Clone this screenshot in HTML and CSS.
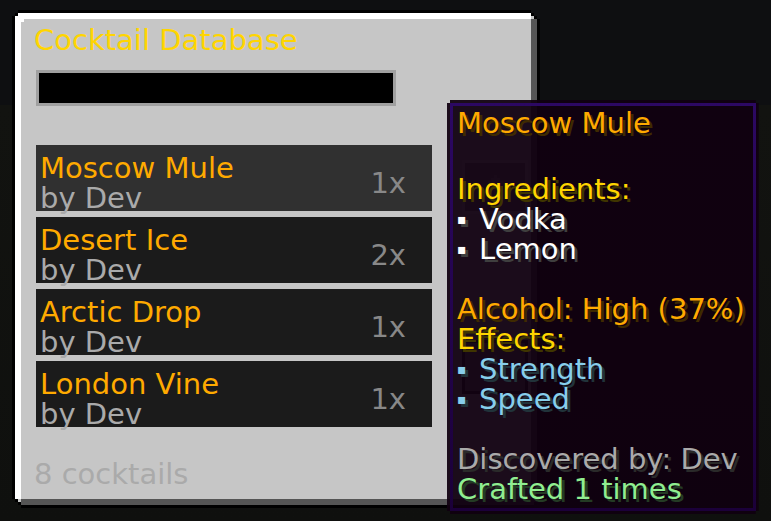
FILE: index.html
```
<!DOCTYPE html>
<html lang="en">
<head>
    <meta charset="UTF-8">
    <meta name="viewport" content="width=device-width, initial-scale=1.0">
    <title>Cocktail Database</title>
    <link rel="stylesheet" href="styles.css">
</head>
<body>
    <main class="window">
        <div class="panel">
            <h1 class="title">Cocktail Database</h1>
            <input class="search" type="text" aria-label="Search cocktails">
            <div class="browser">
                <ul class="list">
                    <li><button class="entry active" type="button">
                        <span class="info"><span class="name">Moscow Mule</span><span class="author">by Dev</span></span>
                        <span class="count">1x</span>
                    </button></li>
                    <li><button class="entry" type="button">
                        <span class="info"><span class="name">Desert Ice</span><span class="author">by Dev</span></span>
                        <span class="count">2x</span>
                    </button></li>
                    <li><button class="entry" type="button">
                        <span class="info"><span class="name">Arctic Drop</span><span class="author">by Dev</span></span>
                        <span class="count">1x</span>
                    </button></li>
                    <li><button class="entry" type="button">
                        <span class="info"><span class="name">London Vine</span><span class="author">by Dev</span></span>
                        <span class="count">1x</span>
                    </button></li>
                </ul>
                <div class="scroll">
                    <button class="arrow" type="button" aria-label="Scroll up">
                        <svg width="15" height="24" viewBox="0 0 5 8" fill="#aaa" shape-rendering="crispEdges"><path d="M2 0h1v1h1v1h1v1H3v5H2V3H0V2h1V1h1z"/></svg>
                    </button>
                    <button class="arrow down" type="button" aria-label="Scroll down">
                        <svg width="15" height="24" viewBox="0 0 5 8" fill="#aaa" shape-rendering="crispEdges"><path d="M2 8h1V7h1V6h1V5H3V0H2v5H0v1h1v1h1z"/></svg>
                    </button>
                </div>
            </div>
            <p class="total">8 cocktails</p>
        </div>
    </main>

    <aside class="tooltip" role="tooltip">
        <div class="tooltip-body">
            <h2 class="orange">Moscow Mule</h2>
            <h3 class="gold">Ingredients:</h3>
            <ul>
                <li><span class="bullet">▪</span>Vodka</li>
                <li><span class="bullet">▪</span>Lemon</li>
            </ul>
            <p class="orange gap">Alcohol: High (37%)</p>
            <h3 class="gold">Effects:</h3>
            <ul class="aqua">
                <li><span class="bullet">▪</span>Strength</li>
                <li><span class="bullet">▪</span>Speed</li>
            </ul>
            <p class="gray gap">Discovered by: Dev</p>
            <p class="green">Crafted 1 times</p>
        </div>
    </aside>
</body>
</html>
```

FILE: styles.css
```
* {
    box-sizing: border-box;
}
body {
    margin: 0;
    padding: 10px 12px;
    min-height: 100vh;
    background: linear-gradient(#0e0f11 0, #0e0f11 105px, #121310 105px, #0f100e 100%);
    color: white;
    font-family: "DejaVu Sans", sans-serif;
    font-size: 29px;
    line-height: 30px;
}
h1, h2, h3, p, ul {
    margin: 0;
    padding: 0;
    font-size: inherit;
    font-weight: normal;
}
ul {
    list-style: none;
}
button {
    font: inherit;
    border: none;
    cursor: pointer;
}

/* window frame with stepped corners */
.window {
    width: 528px;
    max-width: 100%;
    padding: 3px;
    background: black;
    clip-path: polygon(
        6px 0, calc(100% - 9px) 0, calc(100% - 9px) 3px, calc(100% - 6px) 3px, calc(100% - 6px) 6px, calc(100% - 3px) 6px, calc(100% - 3px) 9px, 100% 9px,
        100% calc(100% - 6px), calc(100% - 3px) calc(100% - 6px), calc(100% - 3px) calc(100% - 3px), calc(100% - 6px) calc(100% - 3px), calc(100% - 6px) 100%,
        9px 100%, 9px calc(100% - 3px), 6px calc(100% - 3px), 6px calc(100% - 6px), 3px calc(100% - 6px), 3px calc(100% - 9px), 0 calc(100% - 9px),
        0 6px, 3px 6px, 3px 3px, 6px 3px);
}
.panel {
    padding: 12px 9px 16px 21px;
    background:
        linear-gradient(white, white) 0 0 / calc(100% - 6px) 6px no-repeat,
        linear-gradient(white, white) 0 0 / 6px calc(100% - 6px) no-repeat,
        linear-gradient(white, white) 6px 6px / 3px 3px no-repeat,
        linear-gradient(#555, #555) 100% 100% / calc(100% - 6px) 6px no-repeat,
        linear-gradient(#555, #555) 100% 100% / 6px calc(100% - 6px) no-repeat,
        #c6c6c6;
    clip-path: polygon(
        3px 0, calc(100% - 6px) 0, calc(100% - 6px) 3px, calc(100% - 3px) 3px, calc(100% - 3px) 6px, 100% 6px,
        100% calc(100% - 3px), calc(100% - 3px) calc(100% - 3px), calc(100% - 3px) 100%,
        6px 100%, 6px calc(100% - 3px), 3px calc(100% - 3px), 3px calc(100% - 6px), 0 calc(100% - 6px),
        0 3px, 3px 3px);
}
.title {
    margin-left: -2px;
    color: #ffd500;
}
.search {
    display: block;
    width: 360px;
    max-width: 100%;
    height: 36px;
    margin: 15px 0 39px;
    padding: 0 9px;
    border: 3px solid #a0a0a0;
    border-radius: 0;
    outline: none;
    background: black;
    color: white;
    font: inherit;
}
.browser {
    display: flex;
    gap: 30px;
}
.list {
    flex: 1;
    display: flex;
    flex-direction: column;
    gap: 6px;
}
.entry {
    display: flex;
    align-items: center;
    justify-content: space-between;
    width: 100%;
    height: 66px;
    padding: 9px 26px 0 4px;
    background: #1b1b1b;
    text-align: left;
}
.entry.active {
    background: #303030;
}
.info {
    display: flex;
    flex-direction: column;
}
.name {
    color: #ffaa00;
}
.author {
    color: #aaa;
}
.count {
    color: #888;
}
.scroll {
    display: flex;
    flex-direction: column;
    justify-content: space-between;
    padding: 15px 0 33px;
}
.arrow {
    display: flex;
    align-items: center;
    justify-content: center;
    width: 66px;
    height: 54px;
    border: 3px solid #ddd;
    background: #8b8b8b;
}
.arrow.down {
    border-color: #222;
}
.total {
    margin: 32px 0 0 -2px;
    color: #aaa;
}

.tooltip {
    position: absolute;
    top: 100px;
    left: 447px;
    padding: 3px;
    background: rgba(16, 0, 16, 0.94);
    clip-path: polygon(
        3px 0, calc(100% - 3px) 0, calc(100% - 3px) 3px, 100% 3px,
        100% calc(100% - 3px), calc(100% - 3px) calc(100% - 3px), calc(100% - 3px) 100%,
        3px 100%, 3px calc(100% - 3px), 0 calc(100% - 3px), 0 3px, 3px 3px);
}
.tooltip-body {
    padding: 2px 8px 4px 4px;
    border: 3px solid;
    border-image: linear-gradient(#2c0863, #1b0039) 3;
    color: white;
    white-space: nowrap;
}
.tooltip h2 {
    margin-bottom: 36px;
}
.tooltip li {
    display: flex;
    text-shadow: 3px 3px #3f3f3f;
}
.bullet {
    width: 22px;
    font-size: 14px;
}
.tooltip .gap {
    margin-top: 30px;
}
.tooltip .orange {
    color: #ffaa00;
    text-shadow: 3px 3px #3f2a00;
}
.tooltip .gold {
    color: #ffd500;
    text-shadow: 3px 3px #3f3500;
}
.tooltip .aqua li {
    color: #87ceeb;
    text-shadow: 3px 3px #21333a;
}
.tooltip .gray {
    color: #aaa;
    text-shadow: 3px 3px #2a2a2a;
}
.tooltip .green {
    color: #90ee90;
    text-shadow: 3px 3px #243b24;
}
```
